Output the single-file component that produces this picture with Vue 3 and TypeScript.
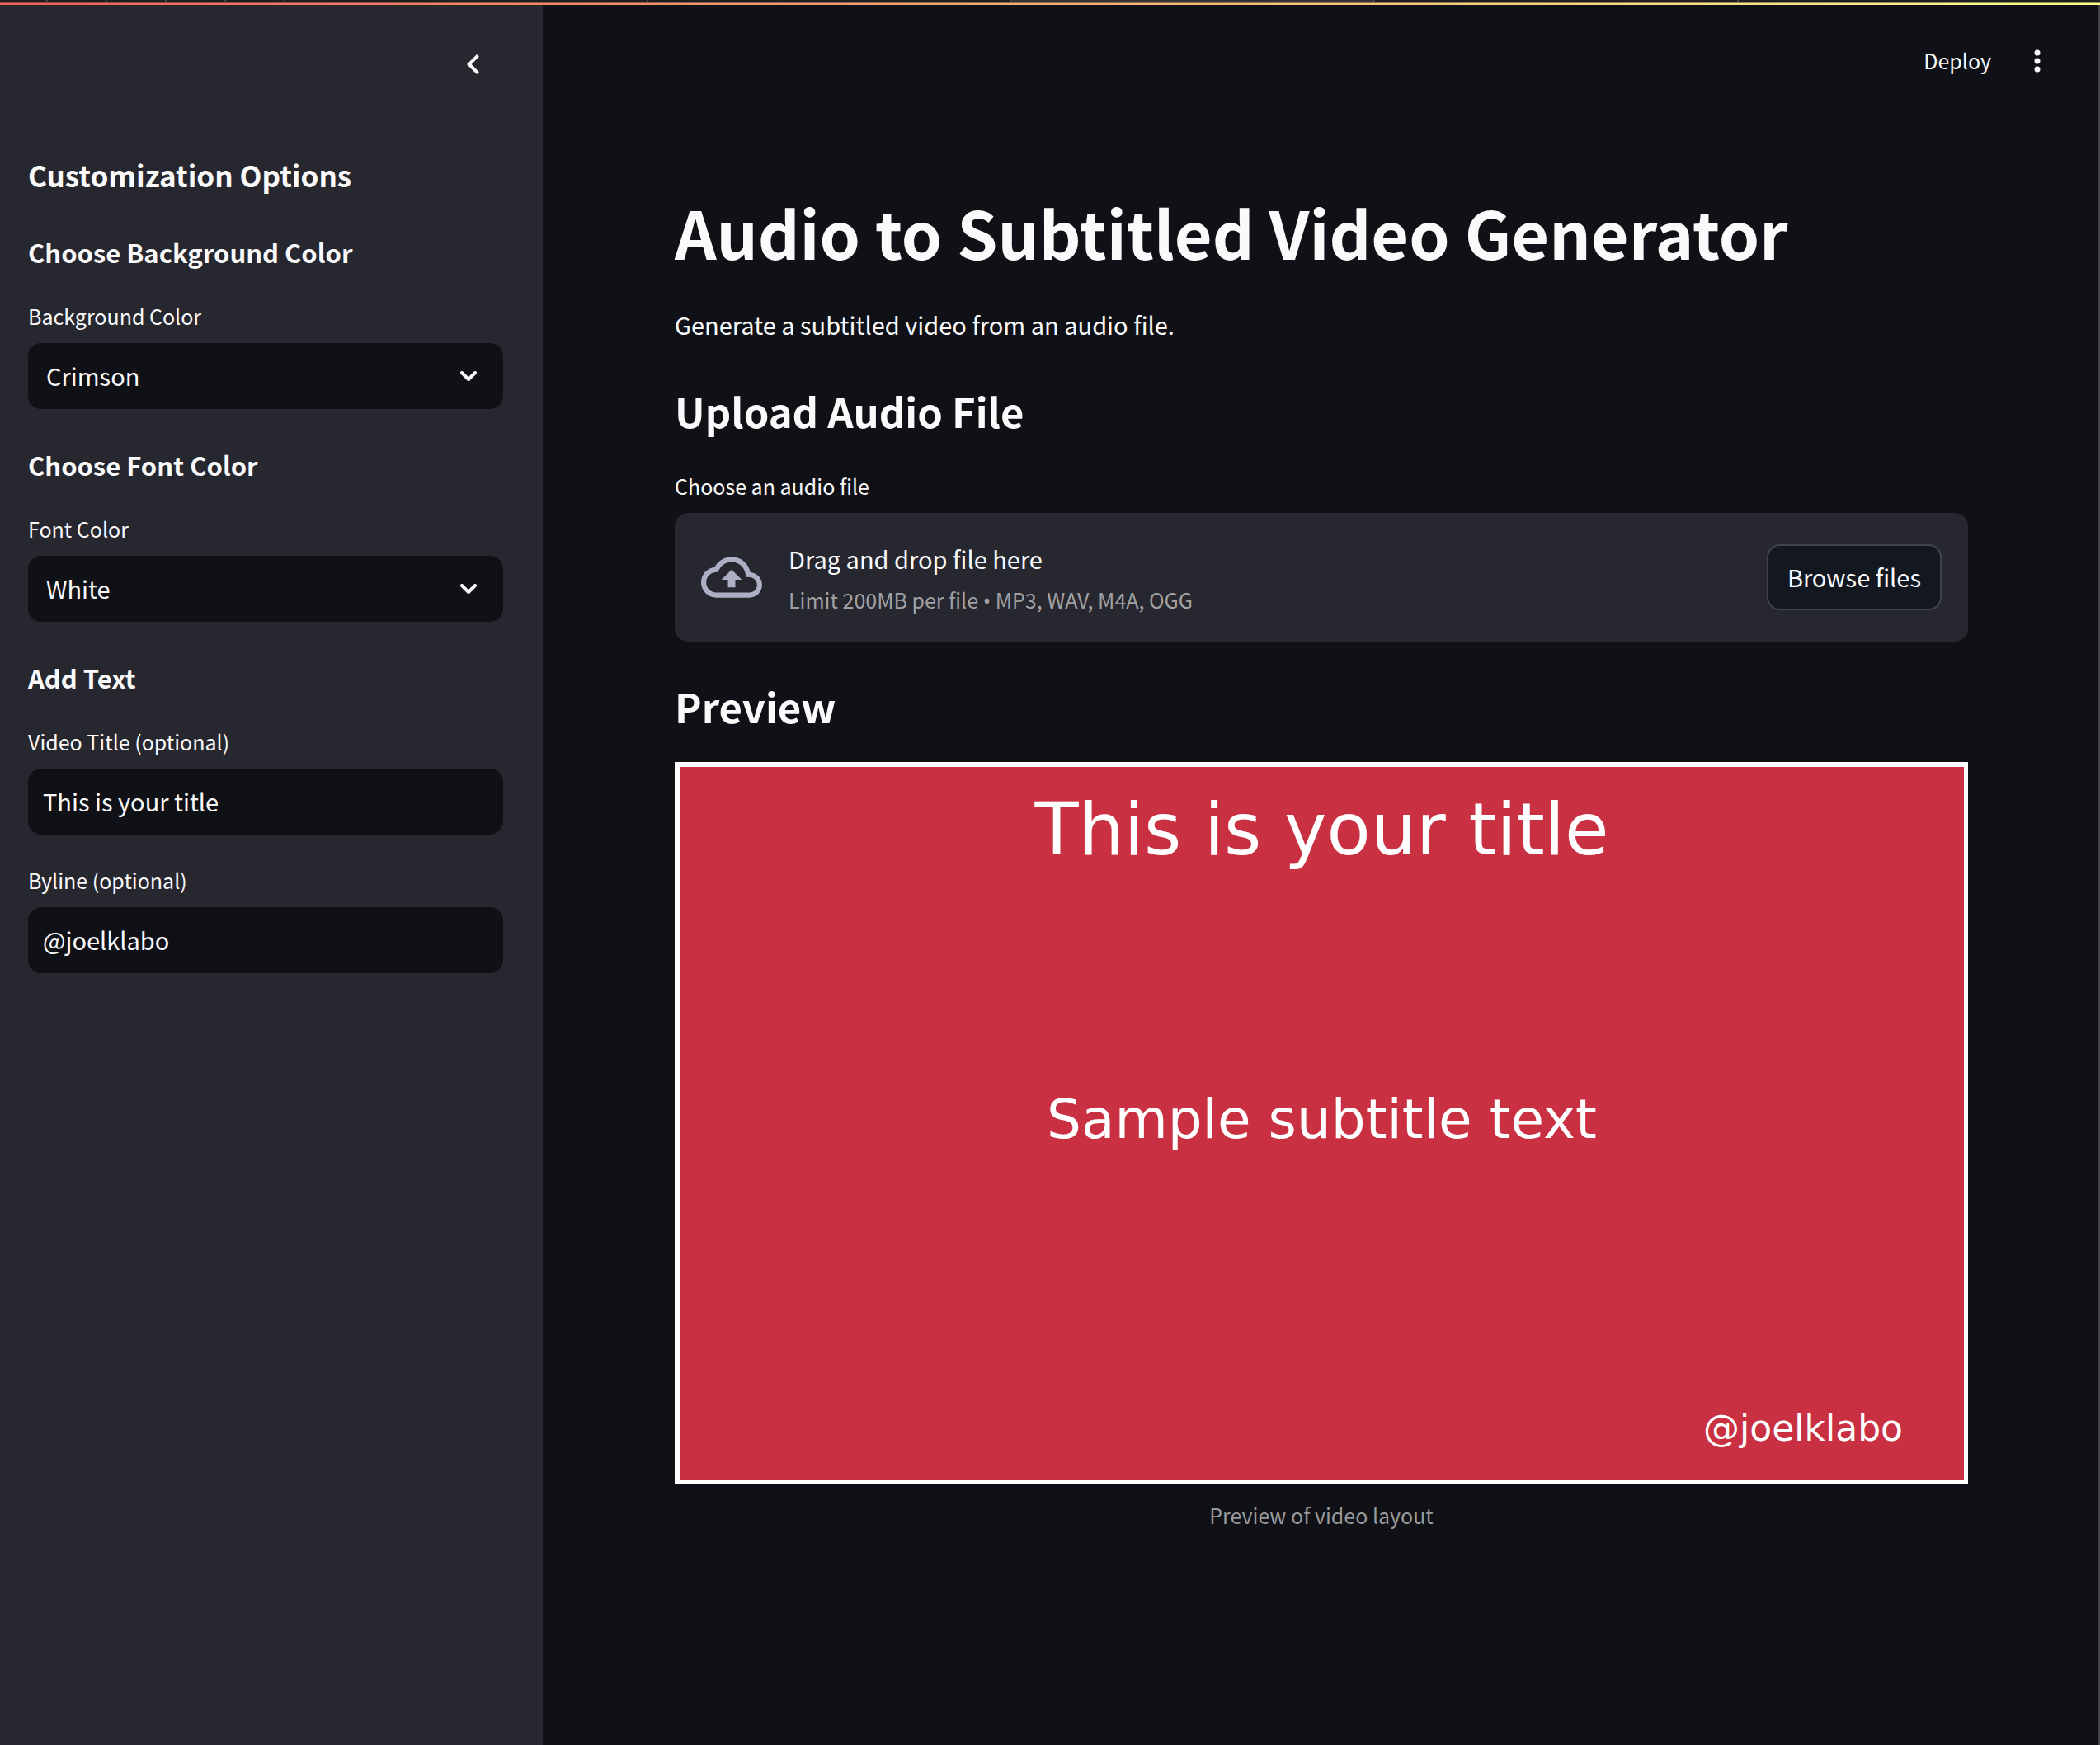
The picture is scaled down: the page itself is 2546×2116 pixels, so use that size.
<script setup lang="ts">
import { computed, ref } from 'vue'

const colorValues: Record<string, string> = {
  Crimson: '#c93143',
  White: '#ffffff',
  Black: '#000000',
  Navy: '#000080',
}
const colorNames = Object.keys(colorValues)

const backgroundColor = ref('Crimson')
const fontColor = ref('White')
const videoTitle = ref('This is your title')
const byline = ref('@joelklabo')
const fileInput = ref<HTMLInputElement | null>(null)

const previewStyle = computed(() => ({
  backgroundColor: colorValues[backgroundColor.value],
  color: colorValues[fontColor.value],
}))

function browse(): void {
  fileInput.value?.click()
}
</script>

<template>
  <div class="page">
    <div class="tab-strip" aria-hidden="true">
      <span v-for="n in 5" :key="n" class="tab-small"></span>
      <span class="tab-wide"></span>
      <span class="tab-wide"></span>
      <span class="tab-wide tab-active"></span>
      <span class="tab-wide"></span>
      <span class="tab-wide tab-last"></span>
    </div>
    <div class="decoration"></div>

    <div class="shell">
      <aside class="sidebar">
        <div class="sidebar-top">
          <button class="icon-button" type="button" aria-label="Collapse sidebar">
            <svg width="48" height="48" viewBox="0 0 24 24" fill="currentColor">
              <path d="M15.41 7.41 14 6l-6 6 6 6 1.41-1.41L10.83 12z" />
            </svg>
          </button>
        </div>

        <div class="sidebar-content">
          <h2 class="side-title">Customization Options</h2>

          <h3 class="side-heading">Choose Background Color</h3>
          <div class="field">
            <label class="field-label" for="background-color">Background Color</label>
            <div class="select-box">
              <select id="background-color" v-model="backgroundColor" class="control select">
                <option v-for="name in colorNames" :key="name">{{ name }}</option>
              </select>
              <svg class="chevron" width="20" height="12" viewBox="0 0 20 12">
                <path d="M2 2l8 8 8-8" />
              </svg>
            </div>
          </div>

          <h3 class="side-heading">Choose Font Color</h3>
          <div class="field">
            <label class="field-label" for="font-color">Font Color</label>
            <div class="select-box">
              <select id="font-color" v-model="fontColor" class="control select">
                <option v-for="name in colorNames" :key="name">{{ name }}</option>
              </select>
              <svg class="chevron" width="20" height="12" viewBox="0 0 20 12">
                <path d="M2 2l8 8 8-8" />
              </svg>
            </div>
          </div>

          <h3 class="side-heading">Add Text</h3>
          <div class="field">
            <label class="field-label" for="video-title">Video Title (optional)</label>
            <input id="video-title" v-model="videoTitle" class="control" type="text" />
          </div>
          <div class="field">
            <label class="field-label" for="byline">Byline (optional)</label>
            <input id="byline" v-model="byline" class="control" type="text" />
          </div>
        </div>
      </aside>

      <main class="main">
        <header class="toolbar">
          <button class="deploy" type="button">Deploy</button>
          <button class="icon-button" type="button" aria-label="Main menu">
            <svg width="40" height="40" viewBox="0 0 40 40" fill="currentColor">
              <circle cx="20" cy="10" r="3.5" />
              <circle cx="20" cy="20" r="3.5" />
              <circle cx="20" cy="30" r="3.5" />
            </svg>
          </button>
        </header>

        <div class="content">
          <h1 class="title">Audio to Subtitled Video Generator</h1>
          <p class="lead">Generate a subtitled video from an audio file.</p>

          <h2 class="section-heading">Upload Audio File</h2>
          <div class="field">
            <label class="field-label" for="audio-file">Choose an audio file</label>
            <div class="dropzone">
              <svg class="cloud" width="74" height="74" viewBox="0 0 24 24" fill="currentColor">
                <path
                  d="M19.35 10.04C18.67 6.59 15.64 4 12 4 9.11 4 6.6 5.64 5.35 8.04 2.34 8.36 0 10.91 0 14c0 3.31 2.69 6 6 6h13c2.76 0 5-2.24 5-5 0-2.64-2.05-4.78-4.65-4.96zM19 18H6c-2.21 0-4-1.79-4-4 0-2.05 1.53-3.76 3.56-3.97l1.07-.11.5-.95C8.08 7.14 9.94 6 12 6c2.62 0 4.88 1.86 5.39 4.43l.3 1.5 1.53.11c1.56.1 2.78 1.41 2.78 2.96 0 1.65-1.35 3-3 3zM8 13h2.55v3h2.9v-3H16l-4-4z"
                />
              </svg>
              <div class="drop-text">
                <span class="drop-main">Drag and drop file here</span>
                <span class="drop-hint">Limit 200MB per file <span class="bullet">•</span> MP3, WAV, M4A, OGG</span>
              </div>
              <input id="audio-file" ref="fileInput" type="file" accept=".mp3,.wav,.m4a,.ogg" hidden />
              <button class="browse" type="button" @click="browse">Browse files</button>
            </div>
          </div>

          <h2 class="section-heading">Preview</h2>
          <figure class="figure">
            <div class="preview" :style="previewStyle">
              <span class="preview-title">{{ videoTitle }}</span>
              <span class="preview-subtitle">Sample subtitle text</span>
              <span class="preview-byline">{{ byline }}</span>
            </div>
            <figcaption class="caption">Preview of video layout</figcaption>
          </figure>
        </div>
      </main>
    </div>
  </div>
</template>

<style>
body {
  margin: 0;
  background: #101116;
}
</style>

<style scoped>
.page {
  display: flex;
  flex-direction: column;
  min-height: 100vh;
  background: #101116;
  color: #fafafa;
  font-family: "Noto Sans CJK SC", "Noto Sans", sans-serif;
  font-size: 29px;
}

.page * {
  box-sizing: border-box;
}

h1,
h2,
h3,
p,
figure {
  margin: 0;
}

button,
input,
select {
  margin: 0;
  border: 0;
  color: inherit;
  font: inherit;
}

.tab-strip {
  display: flex;
  height: 3px;
  border-bottom: 1px solid #000000;
  background: #1e1e1e;
}

.tab-small,
.tab-wide {
  border-right: 2px solid #444444;
}

.tab-small {
  flex: 0 0 72px;
}

.tab-small:first-child {
  flex-basis: 58px;
}

.tab-wide {
  flex: 1;
}

.tab-active {
  background: #333333;
}

.tab-last {
  border-right: 0;
}

.decoration {
  height: 3px;
  border-top: 1px solid rgba(40, 40, 40, 0.5);
  background: linear-gradient(90deg, #f0605a, #fdfd8c);
}

.shell {
  display: flex;
  flex: 1;
}

.sidebar {
  flex: 0 0 658px;
  padding: 0 48px 64px 34px;
  background: #272730;
}

.sidebar-top {
  display: flex;
  justify-content: flex-end;
  height: 180px;
  padding: 48px 12px 0 0;
}

.icon-button {
  display: flex;
  padding: 0;
  align-self: flex-start;
  background: transparent;
}

.sidebar-content,
.content {
  display: flex;
  flex-direction: column;
  gap: 32px;
}

.side-title {
  font-size: 35px;
  font-weight: 600;
  line-height: 52px;
}

.side-heading {
  padding-top: 14px;
  font-size: 31px;
  font-weight: 600;
  line-height: 44px;
}

.field {
  display: flex;
  flex-direction: column;
  gap: 10px;
}

.field-label {
  font-size: 25px;
  line-height: 46px;
}

.control {
  width: 100%;
  height: 80px;
  padding: 0 18px 2px;
  border-radius: 16px;
  background: #101116;
  appearance: none;
}

.select-box {
  display: grid;
  align-items: center;
}

.select-box > * {
  grid-area: 1 / 1;
}

.select {
  padding: 0 72px 2px 22px;
}

.chevron {
  justify-self: end;
  margin-right: 32px;
  fill: none;
  stroke: currentColor;
  stroke-width: 4;
  stroke-linecap: round;
  stroke-linejoin: round;
  pointer-events: none;
}

.main {
  flex: 1;
  min-width: 0;
  border-right: 2px solid #444448;
}

.toolbar {
  display: flex;
  justify-content: flex-end;
  align-items: center;
  gap: 36px;
  height: 136px;
  padding-right: 54px;
}

.toolbar .icon-button {
  align-self: center;
}

.deploy {
  padding: 0 0 2px;
  background: transparent;
  font-size: 25px;
  line-height: 46px;
}

.content {
  padding: 84px 158px 160px 160px;
}

.title {
  font-size: 79px;
  font-weight: 700;
  line-height: 110px;
}

.lead {
  padding-bottom: 2px;
  line-height: 50px;
}

.section-heading {
  padding-top: 10px;
  font-size: 49px;
  font-weight: 600;
  line-height: 72px;
}

.dropzone {
  display: flex;
  align-items: center;
  gap: 32px;
  height: 156px;
  padding: 0 32px;
  border-radius: 16px;
  background: #272730;
}

.cloud {
  flex: none;
  color: #adb0c4;
}

.drop-text {
  display: flex;
  flex: 1;
  flex-direction: column;
}

.drop-main {
  line-height: 54px;
}

.drop-hint {
  color: #a1a1a4;
  font-size: 25px;
  line-height: 46px;
}

.bullet {
  font-family: "Noto Sans", sans-serif;
  line-height: 1;
}

.browse {
  height: 80px;
  padding: 0 23px 2px;
  border: 2px solid #42444d;
  border-radius: 16px;
  background: #131720;
}

.figure {
  display: flex;
  flex-direction: column;
  gap: 16px;
}

.preview {
  display: grid;
  grid-template-rows: 1fr auto 1fr;
  justify-items: center;
  aspect-ratio: 1568 / 876;
  padding: 24px 0 33px;
  border: 6px solid #ffffff;
  border-right-width: 5px;
  border-bottom-width: 5px;
  font-family: "DejaVu Sans", sans-serif;
}

.preview-title {
  font-size: 87px;
  line-height: 104px;
}

.preview-subtitle {
  font-size: 66px;
  line-height: 80px;
}

.preview-byline {
  align-self: end;
  justify-self: end;
  padding-right: 74px;
  font-size: 44px;
  line-height: 60px;
}

.caption {
  color: #98999b;
  font-size: 25px;
  line-height: 42px;
  text-align: center;
}
</style>
